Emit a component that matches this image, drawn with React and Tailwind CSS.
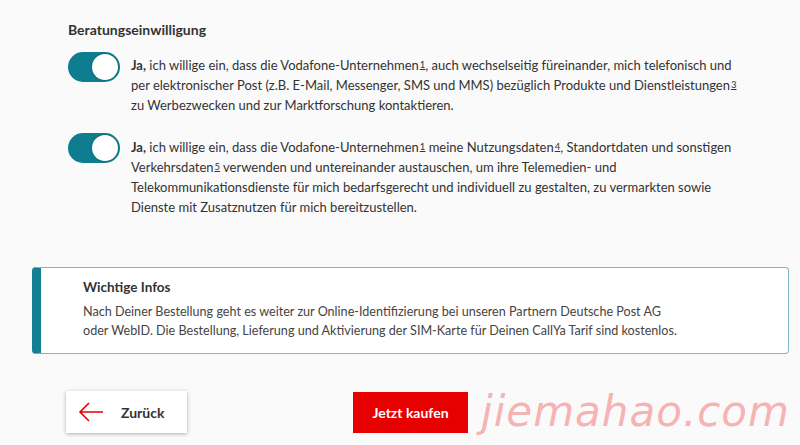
import React, { useState } from "react";

function Toggle({ on, onChange }) {
    return (
        <button
            type="button"
            onClick={onChange}
            className={`relative w-[52px] h-[30px] shrink-0 rounded-full transition ${on ? 'bg-[#0d7d8f]' : 'bg-[#bebebe]'}`}
        >
            <span
                className={`absolute top-[2px] w-[26px] h-[26px] rounded-full bg-white shadow-[0_0_2px_rgba(0,0,0,0.3)] transition-all ${on ? 'left-[24px]' : 'left-[2px]'}`}
            ></span>
        </button>
    );
}

function Sup({ n }) {
    return <sup className="underline text-[9.5px] ml-[1px] relative top-[-2px]">{n}</sup>;
}

function App() {
    const [marketing, setMarketing] = useState(true);
    const [usage, setUsage] = useState(true);

    return (
        <div className="w-[800px] h-[445px] bg-[#fafafa] overflow-hidden text-[#333] font-['Lato','Open_Sans',sans-serif]">
            {/* Consent section */}
            <div className="pl-[68px] pt-[21px]">
                <h3 className="text-[14px] font-bold leading-[18px] text-[#333]">Beratungseinwilligung</h3>

                <div className="flex gap-[11px] mt-[13px]">
                    <Toggle on={marketing} onChange={() => setMarketing(!marketing)} />
                    <p className="w-[606px] pt-[3px] text-[13px] leading-[20px]">
                        <b>Ja,</b> ich willige ein, dass die Vodafone-Unternehmen<Sup n="1" />, auch wechselseitig füreinander, mich telefonisch und per elektronischer Post (z.B. E-Mail, Messenger, SMS und MMS) bezüglich Produkte und Dienstleistungen<Sup n="3" /> zu Werbezwecken und zur Marktforschung kontaktieren.
                    </p>
                </div>

                <div className="flex gap-[11px] mt-[18px]">
                    <Toggle on={usage} onChange={() => setUsage(!usage)} />
                    <p className="w-[606px] pt-[4px] text-[13px] leading-[20px]">
                        <b>Ja,</b> ich willige ein, dass die Vodafone-Unternehmen<Sup n="1" /> meine Nutzungsdaten<Sup n="4" />, Standortdaten und sonstigen Verkehrsdaten<Sup n="5" /> verwenden und untereinander austauschen, um ihre Telemedien- und<br />Telekommunikationsdienste für mich bedarfsgerecht und individuell zu gestalten, zu vermarkten sowie Dienste mit Zusatznutzen für mich bereitzustellen.
                    </p>
                </div>
            </div>

            {/* Info box */}
            <div className="ml-[32px] mt-[50px] w-[757px] h-[87px] bg-white border border-[#7fb9c3] border-l-[9px] border-l-[#137f92] rounded-[4px] pl-[42px] pt-[9px]">
                <h4 className="text-[13.5px] font-bold leading-[20px] text-[#333]">Wichtige Infos</h4>
                <p className="mt-[5px] text-[12.6px] leading-[19px] text-[#444]">
                    Nach Deiner Bestellung geht es weiter zur Online-Identifizierung bei unseren Partnern Deutsche Post AG<br />oder WebID. Die Bestellung, Lieferung und Aktivierung der SIM-Karte für Deinen CallYa Tarif sind kostenlos.
                </p>
            </div>

            {/* Actions */}
            <div className="flex items-center mt-[37px] pl-[66px]">
                <button className="shrink-0 w-[121px] h-[42px] bg-white shadow-[0_1px_4px_rgba(0,0,0,0.3)] flex items-center pl-[12px] gap-[17px]">
                    <svg width="26" height="22" viewBox="0 0 26 22" fill="none" stroke="#e60000" strokeWidth="1.6">
                        <path d="M25 11H2M11 2L2 11l9 9" />
                    </svg>
                    <span className="text-[14px] font-bold text-[#333]">Zurück</span>
                </button>
                <button className="shrink-0 ml-[166px] w-[115px] h-[41px] bg-[#e60000] text-white text-[14px] font-bold">
                    Jetzt kaufen
                </button>
                <span className="shrink-0 whitespace-nowrap ml-[13px] text-[42px] leading-[40px] text-[#f5b3b3] italic font-['DejaVu_Sans',sans-serif] font-light tracking-[1px]">
                    jiemahao.com
                </span>
            </div>
        </div>
    );
}

export default App;
